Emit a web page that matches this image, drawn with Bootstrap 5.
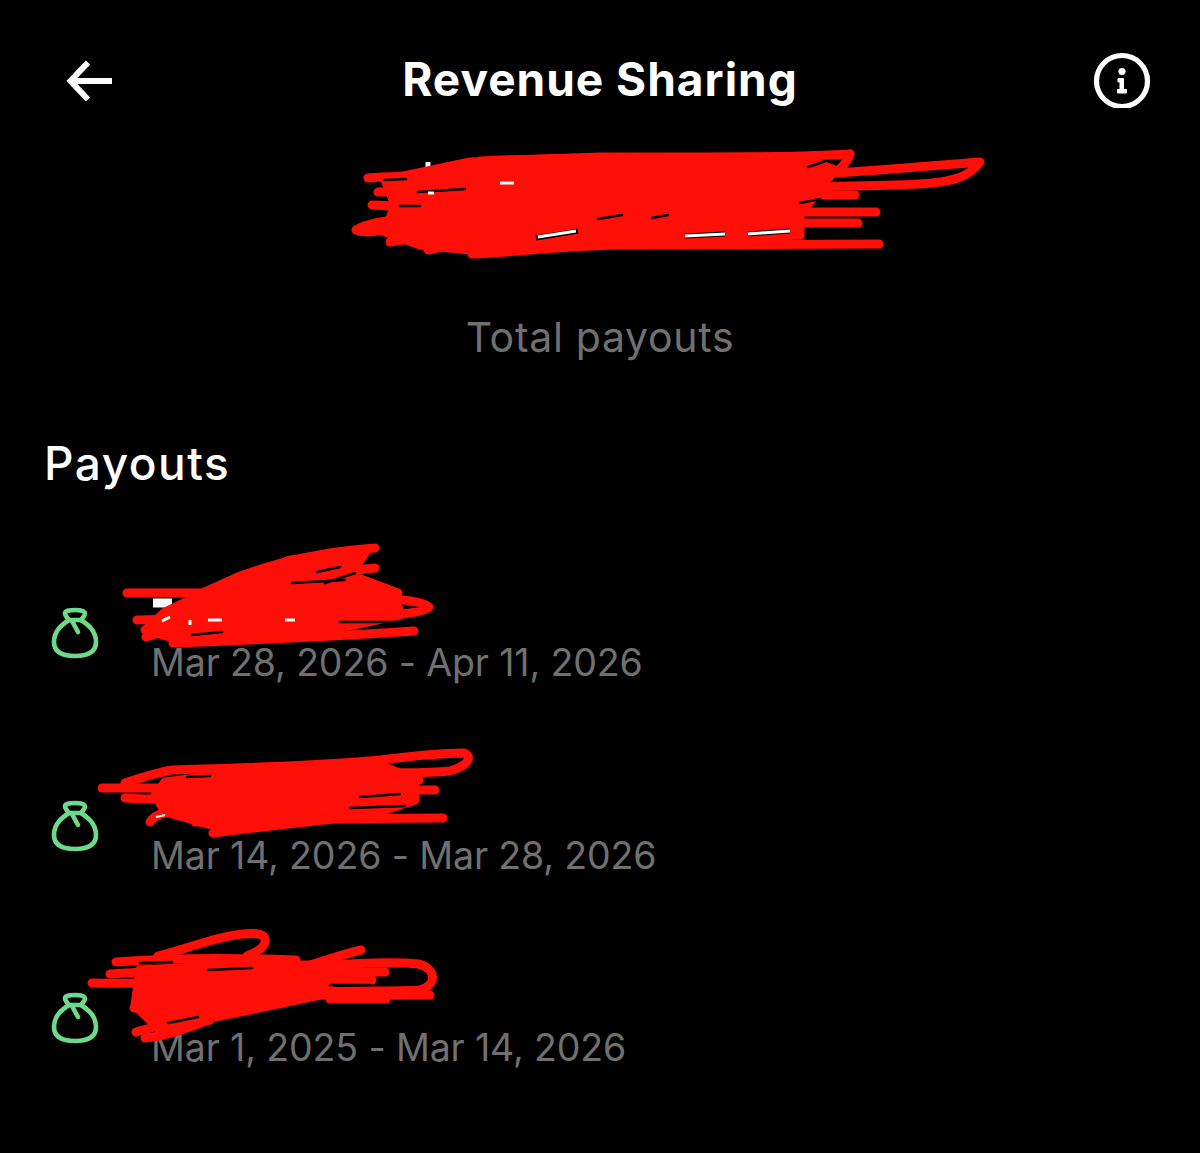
<!DOCTYPE html>
<html lang="en">
<head>
<meta charset="utf-8">
<title>Revenue Sharing</title>
<link href="https://cdn.jsdelivr.net/npm/bootstrap@5.3.0/dist/css/bootstrap.min.css" rel="stylesheet">
<style>
html,body{background:#000;height:100%}
body{font-family:Inter,"Liberation Sans",sans-serif;color:#fff;overflow:hidden}
.screen{position:relative;width:1200px;height:1153px;background:#000}
.topbar{height:162px;padding:0 48px 0 66px}
.topbar svg{display:block}
.title-txt{font-size:46px;font-weight:700;line-height:54px;letter-spacing:1px;margin:3px 0 0;color:#fff}
.hero-gap{height:152px}
.total-txt{font-size:41px;line-height:48px;color:#707070;letter-spacing:.7px;margin-top:-1px;margin-bottom:1px}
.section-txt{font-size:46px;font-weight:500;line-height:54px;margin:75px 0 0 44px;letter-spacing:1.5px;color:#fff}
.pay-list{margin:68px 0 0 51px;gap:40.5px}
.pay-row{height:152px}
.bag{flex:0 0 48px;margin:49px 52px 0 0}
.amt-gap{height:81px}
.date-txt{font-size:37.5px;line-height:48px;color:#707070;letter-spacing:-.13px;white-space:nowrap}
.scrib{position:absolute;left:0;top:0;pointer-events:none}
.scrib path{fill:none;stroke:#ff0f07;stroke-width:9;stroke-linecap:round;stroke-linejoin:round}
.scrib path.core{fill:#ff0f07}
.scrib path.bit{stroke:#fff;stroke-width:3;stroke-linecap:butt}
.scrib path.gap{stroke:#000;stroke-width:5;stroke-linecap:butt}
.scrib path.slit{stroke:#000;stroke-width:2.5;stroke-linecap:round}
</style>
</head>
<body>
<div class="screen">
  <div class="topbar d-flex justify-content-between">
    <svg class="mt-5" width="48" height="60" viewBox="0 0 48 60" fill="none" stroke="#fff" stroke-width="6" aria-label="Back"><path d="M5 33H46"/><path d="M22 14.5L4.5 33L22 51.5"/></svg>
    <h1 class="title-txt position-absolute start-0 end-0 text-center mt-5 pt-1">Revenue Sharing</h1>
    <svg class="mt-5" width="60" height="60" viewBox="0 0 60 60" fill="none" aria-label="Info"><circle cx="30" cy="33" r="25.5" stroke="#fff" stroke-width="5.2"/><circle cx="30" cy="23.5" r="3.6" fill="#fff"/><path d="M26 30.5H31.5V41.5H34.5V45H25.5V41.5H28V34H26Z" fill="#fff" stroke="#fff" stroke-width="1"/></svg>
  </div>
  <div class="hero-gap"></div>
  <div class="total-txt text-center">Total payouts</div>
  <div class="section-txt">Payouts</div>
  <div class="pay-list d-flex flex-column">
    <div class="pay-row d-flex">
      <svg class="bag" width="48" height="52" viewBox="0 0 48 52" fill="none" stroke="#6fd98b" stroke-width="4.6" stroke-linecap="round" stroke-linejoin="round"><path d="M14 6.5C14 4 18 3 24 3C30 3 34 4 34 6.5C34 8.5 32 10.5 30 13H18C16 10.5 14 8.5 14 6.5Z"/><path d="M18 13C12 17 3 23 3 35C3 46 12 49 24 49C36 49 45 46 45 35C45 23 36 17 30 13"/><path d="M21 14L27 25"/></svg>
      <div><div class="amt-gap"></div><div class="date-txt">Mar 28, 2026 - Apr 11, 2026</div></div>
    </div>
    <div class="pay-row d-flex">
      <svg class="bag" width="48" height="52" viewBox="0 0 48 52" fill="none" stroke="#6fd98b" stroke-width="4.6" stroke-linecap="round" stroke-linejoin="round"><path d="M14 6.5C14 4 18 3 24 3C30 3 34 4 34 6.5C34 8.5 32 10.5 30 13H18C16 10.5 14 8.5 14 6.5Z"/><path d="M18 13C12 17 3 23 3 35C3 46 12 49 24 49C36 49 45 46 45 35C45 23 36 17 30 13"/><path d="M21 14L27 25"/></svg>
      <div><div class="amt-gap"></div><div class="date-txt">Mar 14, 2026 - Mar 28, 2026</div></div>
    </div>
    <div class="pay-row d-flex">
      <svg class="bag" width="48" height="52" viewBox="0 0 48 52" fill="none" stroke="#6fd98b" stroke-width="4.6" stroke-linecap="round" stroke-linejoin="round"><path d="M14 6.5C14 4 18 3 24 3C30 3 34 4 34 6.5C34 8.5 32 10.5 30 13H18C16 10.5 14 8.5 14 6.5Z"/><path d="M18 13C12 17 3 23 3 35C3 46 12 49 24 49C36 49 45 46 45 35C45 23 36 17 30 13"/><path d="M21 14L27 25"/></svg>
      <div><div class="amt-gap"></div><div class="date-txt">Mar 1, 2025 - Mar 14, 2026</div></div>
    </div>
  </div>
  <svg class="scrib" width="1200" height="1153" viewBox="0 0 1200 1153" aria-hidden="true">
    <path class="bit" style="stroke-width:5" d="M428 162V172"/>
    <!-- hero -->
    <path class="core" d="M385 180L470 162L600 157L800 157L835 170L815 195L800 215L800 235L700 240L560 245L470 250L420 245L385 232L395 205Z"/>
    <path d="M480 161C600 155 760 160 850 154"/>
    <path d="M790 176C860 172 930 166 980 162C970 176 955 182 920 184C880 186 840 186 800 187"/>
    <path d="M850 154C845 168 835 176 800 186"/>
    <path d="M368 178C420 174 470 176 520 172"/>
    <path d="M378 192C430 190 470 190 520 186"/>
    <path d="M372 205C420 208 440 205 500 200"/>
    <path d="M440 216C410 218 370 220 356 230C366 236 400 226 440 224"/>
    <path d="M790 212H876"/><path d="M790 223H858"/><path d="M790 195H855"/>
    <path d="M390 242L440 234"/><path d="M428 250L470 240"/>
    <path d="M472 254C520 252 560 246 620 245L879 244"/>
    <path class="slit" d="M384 180L406 179"/><path class="slit" d="M418 192L465 189"/><path class="slit" d="M598 219L622 215"/><path class="slit" d="M652 218L668 215"/><path class="slit" d="M808 167L826 161"/><path class="slit" d="M400 206H420"/><path class="slit" d="M800 203L820 199"/>
    <path class="gap" d="M536 238L578 231"/><path class="bit" d="M538 237L576 231"/>
    <path class="gap" d="M685 236L725 234"/><path class="bit" d="M685 236L725 234"/>
    <path class="gap" d="M748 234L790 231"/><path class="bit" d="M748 234L790 231"/>
    <path class="bit" d="M428 193H434"/><path class="bit" d="M500 183H514"/>
    <!-- payout one -->
    <path class="bit" style="stroke-width:9" d="M153 603H172"/>
    <path class="core" d="M165 612L215 588L290 560L365 553L350 575L395 592L400 615L330 630L180 640L145 630Z"/>
    <path d="M375 548C320 552 280 562 240 576L200 594"/>
    <path d="M375 568C340 572 300 576 270 590"/>
    <path d="M127 593H398"/>
    <path d="M340 597C380 597 425 600 429 607C425 614 380 616 340 618"/>
    <path d="M137 620C190 618 280 617 340 612"/>
    <path d="M146 637C170 628 200 620 260 615"/>
    <path d="M173 643C260 640 340 636 414 631"/>
    <path class="slit" d="M317 572L340 567"/><path class="slit" d="M325 583L355 573"/><path class="slit" d="M292 583L345 580"/><path class="slit" d="M192 635L222 632"/><path class="slit" d="M340 622L395 622"/>
    <path class="bit" d="M162 621L170 617"/><path class="bit" d="M190 620V625"/><path class="bit" d="M208 620H222"/><path class="bit" d="M285 620H295"/>
    <!-- payout two -->
    <path class="core" d="M165 782L260 770L380 765L415 780L415 800L370 815L215 826L165 812L155 795Z"/>
    <path d="M102 788H200"/>
    <path d="M125 783C140 778 160 772 172 770C240 768 320 766 380 760C420 755 450 753 464 753C472 756 470 765 450 771C420 774 390 773 360 772"/>
    <path d="M125 798C150 800 190 800 240 796"/>
    <path d="M380 780H419"/><path d="M380 790H435"/><path d="M370 801H412"/>
    <path d="M150 822C155 814 165 810 200 812"/>
    <path d="M195 822C270 820 340 818 443 818"/>
    <path d="M213 833C270 826 320 820 370 815"/>
    <path class="slit" d="M187 777L210 776"/><path class="slit" d="M350 808L405 806"/><path class="bit" style="stroke-width:2" d="M156 817L165 815"/><path class="slit" d="M360 797L400 794"/>
    <!-- payout three -->
    <path class="core" d="M140 970L230 965L330 965L330 985L320 995L250 1010L200 1020L160 1030L135 1005Z"/>
    <path d="M158 956C190 948 235 930 258 934C270 936 268 948 247 956"/>
    <path d="M116 962C180 957 240 958 296 960"/>
    <path d="M110 974C160 970 240 968 300 966"/>
    <path d="M92 983C140 984 200 982 280 978"/>
    <path d="M361 950C340 955 320 962 296 970"/>
    <path d="M320 966C360 963 400 962 418 964C436 968 438 985 420 990C390 992 350 990 322 992"/>
    <path d="M320 972H385"/><path d="M320 980H372"/>
    <path d="M300 995L430 995"/><path d="M330 999H386"/>
    <path d="M134 1008C170 1008 210 1005 250 1000"/>
    <path d="M136 1032C170 1022 200 1018 230 1012"/>
    <path d="M145 1038C170 1036 190 1026 210 1020"/>
    <path class="slit" d="M140 963L172 962"/><path class="slit" d="M208 970L252 968"/><path class="slit" d="M168 1023L198 1017"/><path class="slit" d="M330 985L370 985"/>
  </svg>
</div>
<script src="https://cdn.jsdelivr.net/npm/bootstrap@5.3.0/dist/js/bootstrap.bundle.min.js"></script>
</body>
</html>
